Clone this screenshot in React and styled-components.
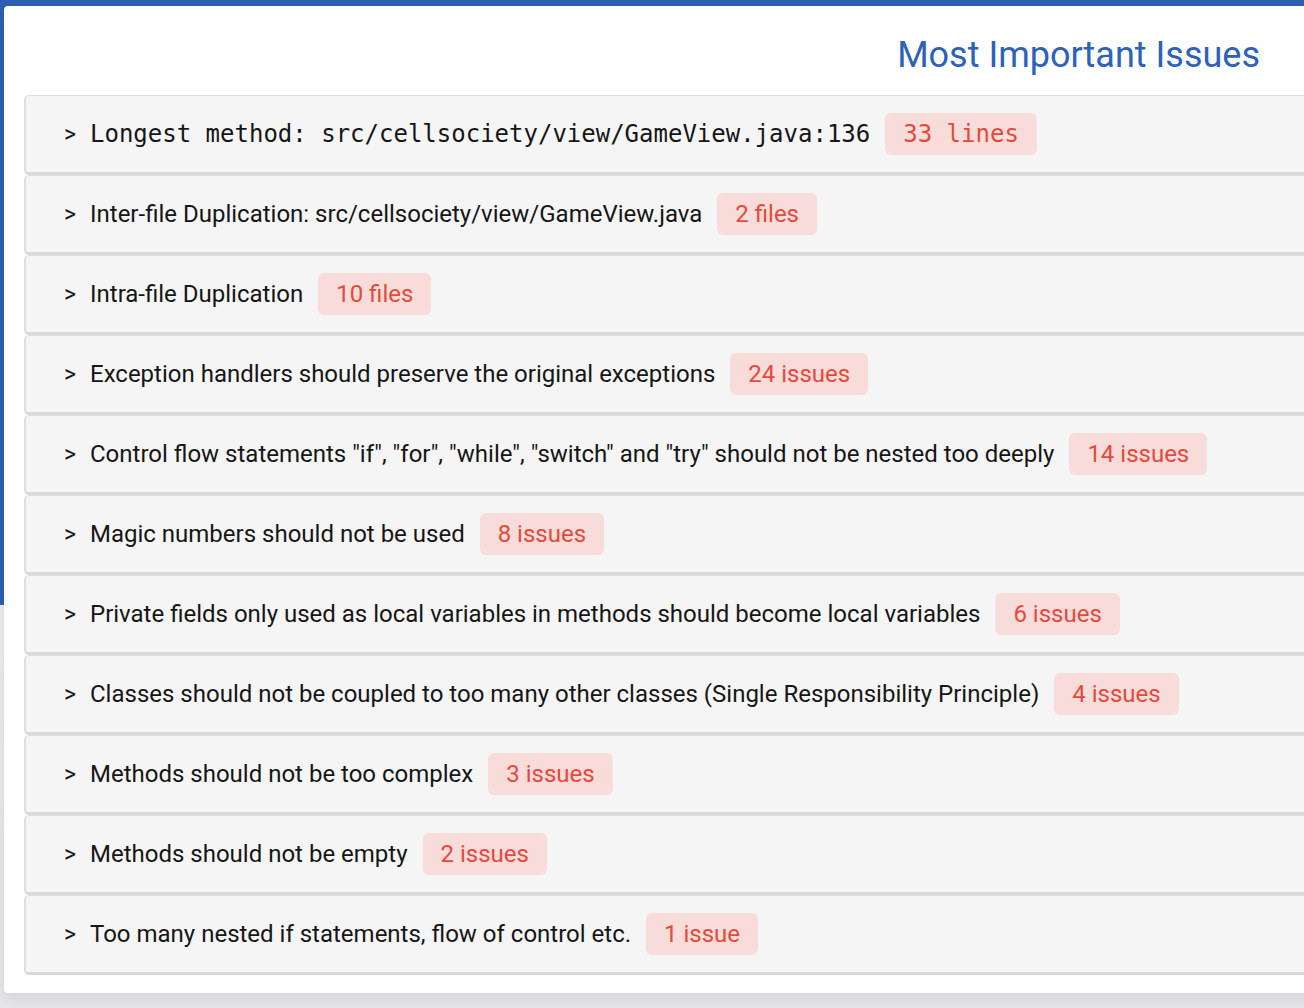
import React from 'react';
import styled, { createGlobalStyle } from 'styled-components';

const GlobalStyle = createGlobalStyle`
  html, body {
    margin: 0;
    padding: 0;
    overflow: hidden;
  }
  body {
    font-family: Roboto, "Liberation Sans", Arial, sans-serif;
  }
`;

const Page = styled.div`
  width: 1304px;
  height: 1008px;
  overflow: hidden;
  padding: 6px 0 0 4px;
  box-sizing: border-box;
  background: linear-gradient(to bottom, #2c5fb3 0, #2c5fb3 605px, #ececee 605px, #e6e6e8 100%);
`;

const Card = styled.section`
  width: 1340px;
  background: #ffffff;
  border-radius: 4px 0 0 4px;
  padding: 29px 20px 18px;
  box-sizing: border-box;
  box-shadow: 0 6px 14px rgba(0, 0, 0, 0.08);
`;

const Title = styled.h2`
  margin: 0 64px 20px 0;
  text-align: right;
  font-family: Roboto, "Liberation Sans", sans-serif;
  font-weight: 400;
  font-size: 36px;
  line-height: 40px;
  color: #2d62b8;
`;

const List = styled.div`
  display: flex;
  flex-direction: column;
`;

const Row = styled.div`
  display: flex;
  align-items: center;
  height: 76px;
  padding-left: 38px;
  background: #f5f5f5;
  border: 1px solid #dedede;
  border-left-width: 2px;
  border-bottom: 3px solid #d9d9d9;
  border-radius: 5px 0 0 5px;
  color: #161616;
  font-size: 24px;
  font-family: ${(p) => (p.$mono ? '"DejaVu Sans Mono", "Liberation Mono", monospace' : 'Roboto, "Liberation Sans", sans-serif')};
`;

const Chevron = styled.span`
  font-family: Roboto, "Liberation Sans", sans-serif;
  font-size: 23px;
  width: 26px;
  flex: none;
`;

const Label = styled.span`
  white-space: nowrap;
`;

const Badge = styled.span`
  margin-left: 15px;
  height: 42px;
  display: inline-flex;
  align-items: center;
  padding: 0 18px;
  border-radius: 6px;
  background: #f8dcd9;
  color: #e44a3b;
  white-space: nowrap;
`;

const issues = [
  { label: 'Longest method: src/cellsociety/view/GameView.java:136', count: '33 lines', mono: true },
  { label: 'Inter-file Duplication: src/cellsociety/view/GameView.java', count: '2 files' },
  { label: 'Intra-file Duplication', count: '10 files' },
  { label: 'Exception handlers should preserve the original exceptions', count: '24 issues' },
  { label: 'Control flow statements "if", "for", "while", "switch" and "try" should not be nested too deeply', count: '14 issues' },
  { label: 'Magic numbers should not be used', count: '8 issues' },
  { label: 'Private fields only used as local variables in methods should become local variables', count: '6 issues' },
  { label: 'Classes should not be coupled to too many other classes (Single Responsibility Principle)', count: '4 issues' },
  { label: 'Methods should not be too complex', count: '3 issues' },
  { label: 'Methods should not be empty', count: '2 issues' },
  { label: 'Too many nested if statements, flow of control etc.', count: '1 issue' },
];

const App = () => {
  return (
    <>
      <GlobalStyle />
      <Page>
        <Card>
          <Title>Most Important Issues</Title>
          <List>
            {issues.map((issue) => (
              <Row key={issue.label} $mono={issue.mono}>
                <Chevron>&gt;</Chevron>
                <Label>{issue.label}</Label>
                <Badge>{issue.count}</Badge>
              </Row>
            ))}
          </List>
        </Card>
      </Page>
    </>
  );
};

export default App;
